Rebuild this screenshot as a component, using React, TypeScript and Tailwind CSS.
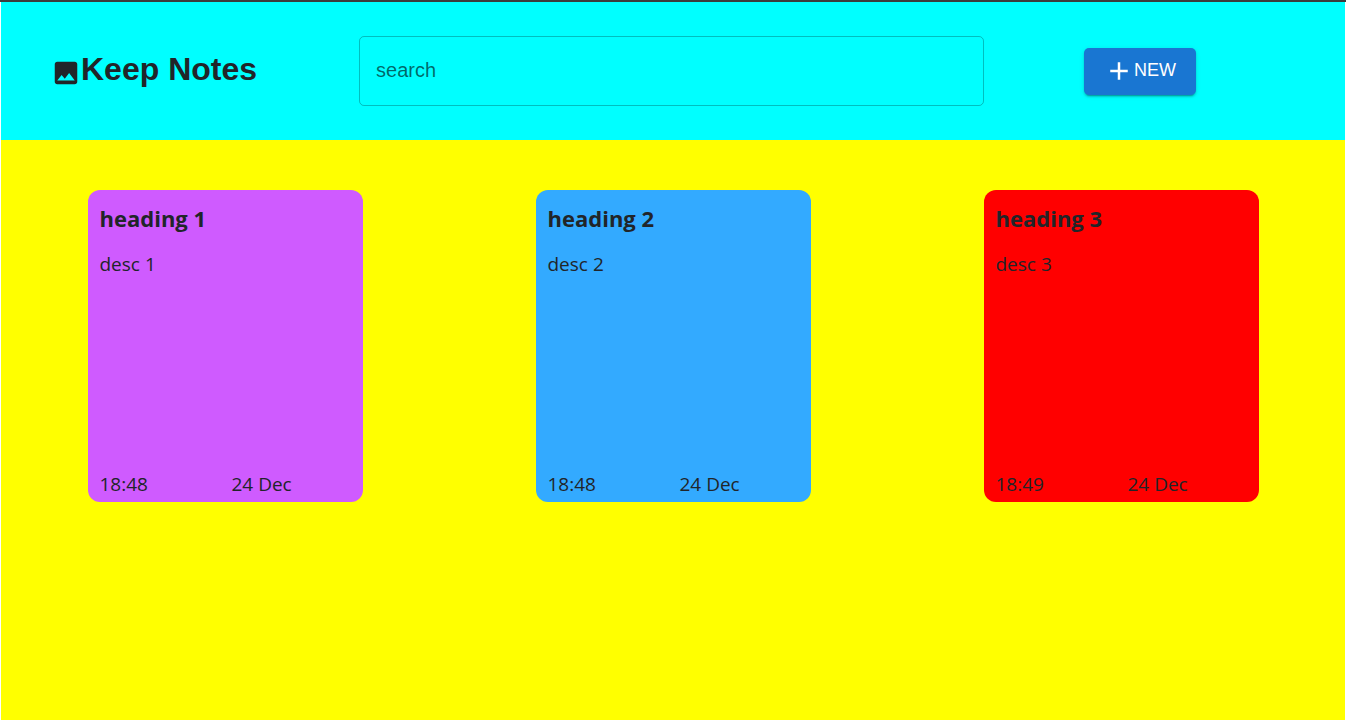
type Note = {
  heading: string;
  desc: string;
  time: string;
  date: string;
  color: string;
};

const notes: Note[] = [
  { heading: "heading 1", desc: "desc 1", time: "18:48", date: "24 Dec", color: "bg-[#cf5bff]" },
  { heading: "heading 2", desc: "desc 2", time: "18:48", date: "24 Dec", color: "bg-[#33aaff]" },
  { heading: "heading 3", desc: "desc 3", time: "18:49", date: "24 Dec", color: "bg-[#ff0000]" },
];

function ImageIcon() {
  return (
    <svg viewBox="0 0 24 24" className="mt-2 size-[30px] shrink-0" fill="currentColor" aria-hidden="true">
      <path d="M21 19V5c0-1.1-.9-2-2-2H5c-1.1 0-2 .9-2 2v14c0 1.1.9 2 2 2h14c1.1 0 2-.9 2-2zM8.5 13.5l2.5 3.01L14.5 12l4.5 6H5l3.5-4.5z" />
    </svg>
  );
}

function AddIcon() {
  return (
    <svg viewBox="0 0 24 24" className="size-[30px] shrink-0" fill="currentColor" aria-hidden="true">
      <path d="M19 13h-6v6h-2v-6H5v-2h6V5h2v6h6v2z" />
    </svg>
  );
}

function NoteCard({ note }: { note: Note }) {
  return (
    <article className={`flex h-[312px] w-[275px] flex-col rounded-xl px-3 pt-3 ${note.color}`}>
      <h2 className="font-['Comic_Sans_MS','Open_Sans',sans-serif] text-[22px] leading-8 font-bold">
        {note.heading}
      </h2>
      <p className="mt-3.5 grow text-[19px] leading-8">{note.desc}</p>
      <footer className="grid grid-cols-[132px_1fr] pb-0.5 text-[19px] leading-8">
        <time>{note.time}</time>
        <time>{note.date}</time>
      </footer>
    </article>
  );
}

export default function App() {
  return (
    <div className="min-h-screen border-t-2 border-[#3c3c3c] bg-white px-px text-[#212529]">
      <div className="flex min-h-[calc(100vh-2px)] flex-col bg-[#ffff00]">
        <header className="flex items-center gap-[100px] bg-[#00ffff] pt-[34px] pr-[149px] pb-[34px] pl-[50px] font-['Liberation_Sans',Arial,sans-serif]">
          <h1 className="flex items-center pr-0.5 pb-1 text-[32px] leading-10 font-bold whitespace-nowrap">
            <ImageIcon />
            Keep Notes
          </h1>
          <input
            type="search"
            aria-label="search"
            placeholder="search"
            className="h-[70px] min-w-0 flex-1 rounded-[5px] border border-black/25 bg-transparent px-4 pb-0.5 text-[20px] outline-none placeholder:text-black/60"
          />
          <button
            type="button"
            className="flex h-[47px] items-center rounded-[5px] bg-[#1976d2] px-5 text-[18px] text-white shadow-[0_3px_1px_-2px_rgba(0,0,0,0.2),0_2px_2px_0_rgba(0,0,0,0.14),0_1px_5px_0_rgba(0,0,0,0.12)]"
          >
            <AddIcon />
            <span className="pb-0.5">NEW</span>
          </button>
        </header>
        <main className="grid grid-cols-3 justify-items-center pt-[50px] font-['Segoe_UI','Open_Sans',sans-serif]">
          {notes.map((note) => (
            <NoteCard key={note.heading} note={note} />
          ))}
        </main>
      </div>
    </div>
  );
}
